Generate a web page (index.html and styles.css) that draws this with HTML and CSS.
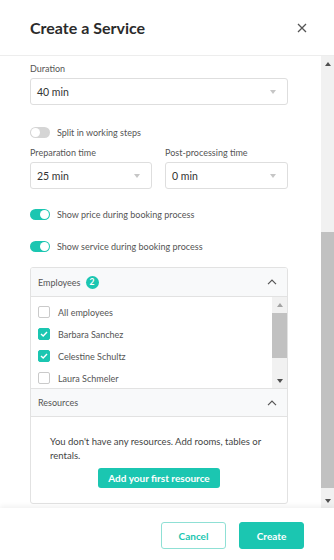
FILE: index.html
```html
<!DOCTYPE html>
<html lang="en">
<head>
    <meta charset="UTF-8">
    <meta name="viewport" content="width=device-width, initial-scale=1.0">
    <title>Create a Service</title>
    <link rel="stylesheet" href="styles.css">
</head>
<body>
    <div class="modal">
        <header class="modal-head">
            <h1>Create a Service</h1>
            <button class="close" aria-label="Close">
                <svg width="10" height="10" viewBox="0 0 10 10"><path d="M1 1L9 9M9 1L1 9" stroke="#555" stroke-width="1.3" fill="none"/></svg>
            </button>
        </header>

        <div class="modal-body">
            <div class="form">
                <div class="field">
                    <label>Duration</label>
                    <div class="select">40 min<span class="caret"></span></div>
                </div>

                <div class="switch-row first">
                    <span class="switch"></span>
                    <span>Split in working steps</span>
                </div>

                <div class="field-pair">
                    <div class="field">
                        <label>Preparation time</label>
                        <div class="select">25 min<span class="caret"></span></div>
                    </div>
                    <div class="field">
                        <label>Post-processing time</label>
                        <div class="select">0 min<span class="caret"></span></div>
                    </div>
                </div>

                <div class="switch-row">
                    <span class="switch on"></span>
                    <span>Show price during booking process</span>
                </div>
                <div class="switch-row">
                    <span class="switch on"></span>
                    <span>Show service during booking process</span>
                </div>

                <div class="panel">
                    <div class="panel-head">
                        <span>Employees</span>
                        <span class="badge">2</span>
                        <svg class="chevron" width="10" height="6" viewBox="0 0 10 6"><path d="M1 5.2L5 1.2L9 5.2" stroke="#555" stroke-width="1.2" fill="none"/></svg>
                    </div>
                    <div class="list-wrap">
                        <ul class="list">
                            <li><span class="check"></span>All employees</li>
                            <li><span class="check on"><svg width="8" height="6" viewBox="0 0 8 6"><path d="M1 3L3.2 5L7 1" stroke="#fff" stroke-width="1.4" fill="none"/></svg></span>Barbara Sanchez</li>
                            <li><span class="check on"><svg width="8" height="6" viewBox="0 0 8 6"><path d="M1 3L3.2 5L7 1" stroke="#fff" stroke-width="1.4" fill="none"/></svg></span>Celestine Schultz</li>
                            <li><span class="check"></span>Laura Schmeler</li>
                        </ul>
                        <div class="mini-scroll">
                            <span class="arrow up light"></span>
                            <div class="mini-track"><div class="mini-thumb"></div></div>
                            <span class="arrow down"></span>
                        </div>
                    </div>
                    <div class="panel-head second">
                        <span>Resources</span>
                        <svg class="chevron" width="10" height="6" viewBox="0 0 10 6"><path d="M1 5.2L5 1.2L9 5.2" stroke="#555" stroke-width="1.2" fill="none"/></svg>
                    </div>
                    <div class="panel-body">
                        <p>You don't have any resources. Add rooms, tables or rentals.</p>
                        <button class="btn-small">Add your first resource</button>
                    </div>
                </div>
            </div>

            <div class="scrollbar">
                <span class="arrow up"></span>
                <div class="track"><div class="thumb"></div></div>
                <span class="arrow down"></span>
            </div>
        </div>

        <footer class="modal-foot">
            <button class="btn btn-outline">Cancel</button>
            <button class="btn btn-primary">Create</button>
        </footer>
    </div>
</body>
</html>
```

FILE: styles.css
```css
:root {
    --teal: #1bc6b1;
    --text: #333;
    --muted: #555;
    --border: #dedede;
    --head-bg: #f8f9fa;
}

* {
    margin: 0;
    padding: 0;
    box-sizing: border-box;
    font-family: 'Lato', 'Noto Sans', sans-serif;
}

body {
    background: #fff;
    width: 334px;
    height: 560px;
    overflow: hidden;
    color: var(--text);
}

.modal {
    display: flex;
    flex-direction: column;
    height: 560px;
}

/* header */
.modal-head {
    height: 56px;
    border-bottom: 1px solid #ededed;
    display: flex;
    align-items: center;
    justify-content: space-between;
    padding: 0 26px 0 30px;
}

.modal-head h1 {
    font-size: 16px;
    font-weight: 700;
    color: #2b2b2b;
}

.close {
    background: none;
    border: none;
    width: 12px;
    height: 12px;
    display: flex;
    align-items: center;
    justify-content: center;
}

/* scrolling body */
.modal-body {
    height: 452px;
    display: flex;
    overflow: hidden;
}

.form {
    width: 288px;
    padding: 6px 0 0 30px;
}

.field label {
    display: block;
    font-size: 9px;
    line-height: 14px;
    color: var(--muted);
    margin-bottom: 2px;
}

.select {
    height: 27px;
    border: 1px solid var(--border);
    border-radius: 3px;
    display: flex;
    align-items: center;
    justify-content: space-between;
    padding: 0 11px 0 6px;
    font-size: 10.5px;
    color: var(--text);
}

.caret {
    width: 0;
    height: 0;
    border-left: 3.5px solid transparent;
    border-right: 3.5px solid transparent;
    border-top: 4px solid #c6c6c6;
}

.field-pair {
    display: grid;
    grid-template-columns: 122px 123px;
    gap: 13px;
    margin-top: 8px;
}

.switch-row {
    display: flex;
    align-items: center;
    gap: 7px;
    height: 11px;
    margin-top: 20px;
    font-size: 9px;
    color: var(--muted);
}

.switch-row.first {
    margin-top: 22px;
}

.switch-row + .switch-row {
    margin-top: 21px;
}

.switch {
    width: 20px;
    height: 11px;
    border-radius: 6px;
    background: #d5d5d5;
    position: relative;
    flex-shrink: 0;
}

.switch::after {
    content: '';
    position: absolute;
    top: 1px;
    left: 1px;
    width: 9px;
    height: 9px;
    border-radius: 50%;
    background: #fff;
}

.switch.on {
    background: var(--teal);
}

.switch.on::after {
    left: 10px;
}

/* accordion panel */
.panel {
    margin-top: 15px;
    border: 1px solid #e2e2e2;
    border-radius: 3px;
    overflow: hidden;
}

.panel-head {
    height: 29px;
    background: var(--head-bg);
    border-bottom: 1px solid #e2e2e2;
    display: flex;
    align-items: center;
    padding: 0 10px 0 7px;
    font-size: 9px;
    color: var(--muted);
    gap: 5px;
}

.panel-head.second {
    border-top: 1px solid #e2e2e2;
}

.chevron {
    margin-left: auto;
}

.badge {
    width: 13px;
    height: 13px;
    border-radius: 50%;
    background: var(--teal);
    color: #fff;
    font-size: 8.5px;
    font-weight: 700;
    display: flex;
    align-items: center;
    justify-content: center;
}

.list-wrap {
    display: flex;
    height: 91px;
}

.list {
    list-style: none;
    flex: 1;
    padding: 4px 0 0 7px;
    overflow: hidden;
}

.list li {
    height: 22px;
    display: flex;
    align-items: center;
    gap: 8px;
    font-size: 9px;
    color: var(--muted);
}

.check {
    width: 12px;
    height: 12px;
    border: 1px solid #cacaca;
    border-radius: 2px;
    display: flex;
    align-items: center;
    justify-content: center;
    background: #fff;
}

.check.on {
    background: var(--teal);
    border-color: var(--teal);
}

.mini-scroll {
    width: 15px;
    background: #f1f1f1;
    display: flex;
    flex-direction: column;
    align-items: center;
}

.mini-track {
    flex: 1;
    width: 100%;
    padding-top: 1px;
}

.mini-thumb {
    height: 45px;
    background: #c1c1c1;
}

.arrow {
    width: 15px;
    height: 15px;
    display: flex;
    align-items: center;
    justify-content: center;
    flex-shrink: 0;
}

.arrow::before {
    content: '';
    border-left: 3.5px solid transparent;
    border-right: 3.5px solid transparent;
}

.arrow.up::before {
    border-bottom: 4px solid #505050;
}

.arrow.up.light::before {
    border-bottom-color: #a3a3a3;
}

.arrow.down::before {
    border-top: 4px solid #505050;
}

.panel-body {
    padding: 18px 19px 15px;
    text-align: center;
}

.panel-body p {
    text-align: left;
    font-size: 9.5px;
    line-height: 14px;
    color: #444;
}

.btn-small {
    margin-top: 5px;
    height: 20px;
    width: 122px;
    border: none;
    border-radius: 3px;
    background: var(--teal);
    color: #fff;
    font-size: 10px;
    font-weight: 700;
}

/* page scrollbar */
.scrollbar {
    margin-left: auto;
    width: 13px;
    background: #f1f1f1;
    display: flex;
    flex-direction: column;
}

.scrollbar .arrow {
    width: 13px;
}

.track {
    flex: 1;
    padding: 161px 0 5px;
}

.thumb {
    height: 100%;
    background: #c1c1c1;
}

/* footer */
.modal-foot {
    flex: 1;
    display: flex;
    justify-content: flex-end;
    align-items: flex-start;
    gap: 13px;
    padding: 14px 30px 0 0;
    box-shadow: 0 -2px 5px rgba(0, 0, 0, 0.06);
    position: relative;
    background: #fff;
}

.btn {
    width: 65px;
    height: 27px;
    border-radius: 3px;
    font-size: 10px;
    font-weight: 700;
}

.btn-outline {
    background: #fff;
    border: 1px solid #8fe0d5;
    color: var(--teal);
}

.btn-primary {
    background: var(--teal);
    border: 1px solid var(--teal);
    color: #fff;
}
```
